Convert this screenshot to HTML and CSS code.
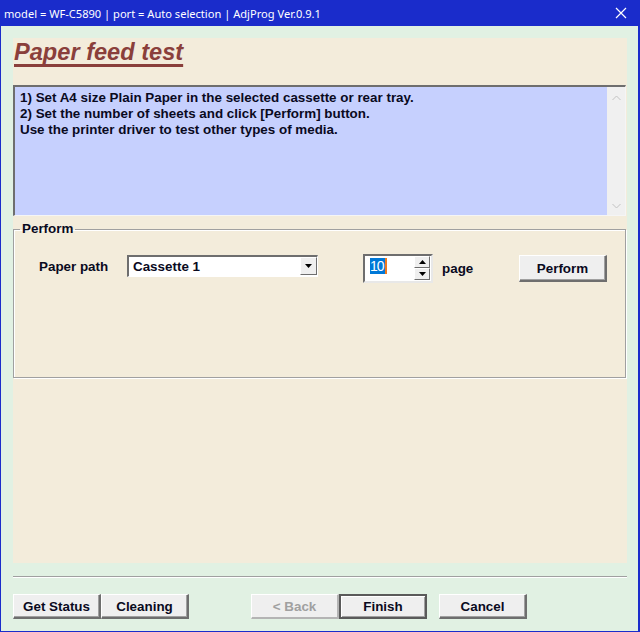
FILE: index.html
```html
<!DOCTYPE html>
<html lang="en">
<head>
  <meta charset="UTF-8">
  <title>AdjProg - Paper feed test</title>
  <link rel="stylesheet" href="styles.css">
</head>
<body>
  <div class="window">
    <div class="titlebar">
      <span class="titlebar-text">model = WF-C5890 | port = Auto selection | AdjProg Ver.0.9.1</span>
      <svg class="close-icon" width="12" height="12" viewBox="0 0 12 12">
        <path d="M1 1 L11 11 M11 1 L1 11" stroke="#ffffff" stroke-width="1.2" fill="none"/>
      </svg>
    </div>

    <div class="client">
      <div class="panel">
        <h1 class="page-title">Paper feed test</h1>

        <div class="memo">
          <div class="memo-text">
            1) Set A4 size Plain Paper in the selected cassette or rear tray.<br>
            2) Set the number of sheets and click [Perform] button.<br>
            Use the printer driver to test other types of media.
          </div>
          <div class="scrollbar">
            <svg width="9" height="6" viewBox="0 0 9 6"><path d="M0.5 5 L4.5 1 L8.5 5" stroke="#c2c2c2" stroke-width="1" fill="none"/></svg>
            <svg width="9" height="6" viewBox="0 0 9 6"><path d="M0.5 1 L4.5 5 L8.5 1" stroke="#c2c2c2" stroke-width="1" fill="none"/></svg>
          </div>
        </div>

        <fieldset class="group">
          <legend>Perform</legend>
          <div class="group-row">
            <span class="label path-label">Paper path</span>
            <div class="combo">
              <span class="combo-text">Cassette 1</span>
              <span class="arrow-btn combo-btn">
                <svg width="7" height="4" viewBox="0 0 7 4"><path d="M0 0 H7 L3.5 4 Z" fill="#000"/></svg>
              </span>
            </div>
            <div class="spin">
              <span class="spin-value"><span class="selected">10</span><span class="caret"></span></span>
              <div class="spin-btns">
                <span class="arrow-btn spin-btn">
                  <svg width="7" height="4" viewBox="0 0 7 4"><path d="M0 4 H7 L3.5 0 Z" fill="#000"/></svg>
                </span>
                <span class="arrow-btn spin-btn">
                  <svg width="7" height="4" viewBox="0 0 7 4"><path d="M0 0 H7 L3.5 4 Z" fill="#000"/></svg>
                </span>
              </div>
            </div>
            <span class="label page-label">page</span>
            <button class="btn perform-btn">Perform</button>
          </div>
        </fieldset>
      </div>

      <div class="separator"></div>

      <div class="button-bar">
        <button class="btn">Get Status</button>
        <button class="btn">Cleaning</button>
        <button class="btn btn-disabled back-btn">&lt; Back</button>
        <button class="btn btn-default">Finish</button>
        <button class="btn cancel-btn">Cancel</button>
      </div>
    </div>
  </div>
</body>
</html>
```

FILE: styles.css
```css
* {
  box-sizing: border-box;
}
body {
  margin: 0;
  font-family: "Liberation Sans", Arial, sans-serif;
  font-size: 13.4px;
  font-weight: bold;
  color: #0a0a1e;
}
.window {
  width: 640px;
  height: 632px;
  display: flex;
  flex-direction: column;
  background: #1a2ccb;
  padding: 0 2px 1px 1px;
}
.titlebar {
  height: 26px;
  display: flex;
  align-items: center;
  justify-content: space-between;
  padding: 0 11px 0 3px;
  color: #ffffff;
}
.titlebar-text {
  font-family: "Noto Sans", sans-serif;
  font-size: 11.1px;
  font-weight: normal;
}
.client {
  flex: 1;
  background: #e1f1e3;
  padding: 12px 11px 0 12px;
  display: flex;
  flex-direction: column;
}
.panel {
  height: 525px;
  background: #f3ecdb;
  padding: 0 1px 0 0;
  display: flex;
  flex-direction: column;
}
.page-title {
  margin: 0;
  height: 47px;
  padding: 1px 0 0 1px;
  font-size: 23.6px;
  font-style: italic;
  font-weight: bold;
  color: #8a3f3b;
  text-decoration: underline;
  text-decoration-thickness: 3px;
  text-underline-offset: 4px;
  text-decoration-skip-ink: none;
}
.memo {
  height: 131px;
  display: flex;
  background: #c6d0fe;
  border-top: 2px solid #6e6e6e;
  border-left: 2px solid #6e6e6e;
  border-right: 1px solid #f5f5f5;
  border-bottom: 1px solid #f5f5f5;
}
.memo-text {
  flex: 1;
  padding: 3px 0 0 5px;
  line-height: 16px;
}
.scrollbar {
  width: 18px;
  background: #f0f0f0;
  display: flex;
  flex-direction: column;
  justify-content: space-between;
  align-items: center;
  padding: 8px 0 6px;
}
.group {
  margin: 6px 0 0 0;
  height: 156px;
  border: 1px solid #a0a0a0;
  box-shadow: inset 1px 1px 0 #ffffff, 1px 1px 0 #ffffff;
  padding: 0;
}
.group legend {
  padding: 0 2px;
  margin-left: 6px;
  line-height: 14px;
}
.group-row {
  display: flex;
  align-items: flex-start;
  padding: 19px 0 0 25px;
}
.label {
  flex-shrink: 0;
  white-space: nowrap;
}
.path-label {
  width: 88px;
  margin-top: 4px;
}
.combo {
  flex-shrink: 0;
  width: 191px;
  height: 22px;
  background: #ffffff;
  border-top: 2px solid #6e6e6e;
  border-left: 2px solid #6e6e6e;
  border-right: 1px solid #ffffff;
  border-bottom: 1px solid #ffffff;
  display: flex;
  justify-content: space-between;
}
.combo-text {
  padding: 2px 0 0 4px;
}
.arrow-btn {
  display: flex;
  align-items: center;
  justify-content: center;
  background: #efefef;
  border-top: 1px solid #ffffff;
  border-left: 1px solid #ffffff;
  border-right: 1px solid #6e6e6e;
  border-bottom: 1px solid #6e6e6e;
}
.combo-btn {
  width: 17px;
  height: 18px;
}
.spin {
  flex-shrink: 0;
  margin-left: 45px;
  margin-top: -1px;
  width: 70px;
  height: 29px;
  background: #ffffff;
  border-top: 2px solid #6e6e6e;
  border-left: 2px solid #6e6e6e;
  border-right: 2px solid #e8e8e8;
  border-bottom: 2px solid #e8e8e8;
  display: flex;
  justify-content: space-between;
}
.spin-value {
  padding: 2px 0 0 5px;
  display: flex;
  align-items: flex-start;
  font-weight: normal;
  font-size: 14px;
}
.selected {
  background: #0078d7;
  color: #ffffff;
  line-height: 16px;
  letter-spacing: -1px;
  padding-right: 1px;
}
.caret {
  width: 2px;
  height: 16px;
  background: #f07a1e;
}
.spin-btns {
  display: flex;
  flex-direction: column;
  margin: 0 1px 0 0;
}
.spin-btn {
  width: 16px;
  height: 12px;
}
.page-label {
  width: 77px;
  margin-left: 9px;
  margin-top: 6px;
}
.btn {
  flex-shrink: 0;
  font-family: "Liberation Sans", Arial, sans-serif;
  font-size: 13.4px;
  font-weight: bold;
  color: #0a0a1e;
  width: 88px;
  height: 25px;
  padding: 0;
  background: #efefef;
  border-top: 1px solid #ffffff;
  border-left: 1px solid #ffffff;
  border-right: 2px solid #6e6e6e;
  border-bottom: 2px solid #6e6e6e;
  box-shadow: inset -1px -1px 0 #a0a0a0;
}
.perform-btn {
  height: 27px;
}
.separator {
  margin-top: 13px;
  height: 2px;
  border-top: 1px solid #a0a0a0;
  border-bottom: 1px solid #ffffff;
}
.button-bar {
  display: flex;
  margin-top: 16px;
}
.btn-disabled {
  color: #a0a0a0;
  border-right-color: #b4b4b4;
  border-bottom-color: #b4b4b4;
  box-shadow: none;
}
.back-btn {
  margin-left: 62px;
}
.btn-default {
  border: 2px solid #5a5a5a;
  box-shadow: inset 1px 1px 0 #ffffff, inset -1px -1px 0 #a0a0a0;
}
.cancel-btn {
  margin-left: 12px;
}
```
